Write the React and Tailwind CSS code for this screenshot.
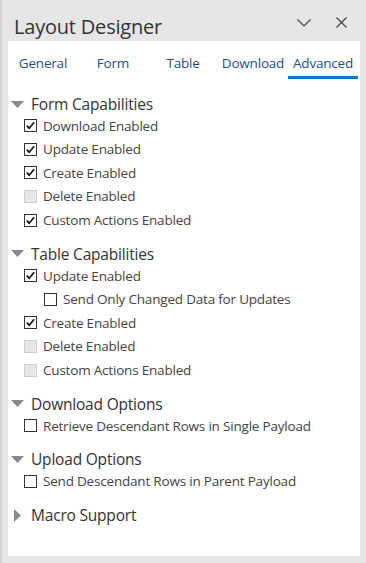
import React from "react";

const tabs = ["General", "Form", "Table", "Download", "Advanced"];

const sections = [
  {
    title: "Form Capabilities",
    open: true,
    items: [
      { label: "Download Enabled", state: "on" },
      { label: "Update Enabled", state: "on" },
      { label: "Create Enabled", state: "on" },
      { label: "Delete Enabled", state: "disabled" },
      { label: "Custom Actions Enabled", state: "on" },
    ],
  },
  {
    title: "Table Capabilities",
    open: true,
    items: [
      { label: "Update Enabled", state: "on" },
      { label: "Send Only Changed Data for Updates", state: "off", indent: true },
      { label: "Create Enabled", state: "on" },
      { label: "Delete Enabled", state: "disabled" },
      { label: "Custom Actions Enabled", state: "disabled" },
    ],
  },
  {
    title: "Download Options",
    open: true,
    items: [{ label: "Retrieve Descendant Rows in Single Payload", state: "off" }],
  },
  {
    title: "Upload Options",
    open: true,
    items: [{ label: "Send Descendant Rows in Parent Payload", state: "off" }],
  },
  { title: "Macro Support", open: false, items: [] },
];

const Checkbox = ({ state }) => {
  if (state === "disabled") {
    return <span className="w-[13px] h-[13px] border border-[#cfcfcf] bg-[#e8e8e8] shrink-0" />;
  }
  return (
    <span className="w-[13px] h-[13px] border border-[#333] bg-white shrink-0 flex items-center justify-center">
      {state === "on" && (
        <svg width="11" height="11" viewBox="0 0 11 11">
          <path d="M1.8 5.6 L4.2 8.2 L9.2 2.2" fill="none" stroke="#111" strokeWidth="1.7" />
        </svg>
      )}
    </span>
  );
};

const Caret = ({ open }) =>
  open ? (
    <svg width="13" height="8" viewBox="0 0 13 8" className="shrink-0">
      <path d="M0 0 H13 L6.5 7 Z" fill="#8a8a8a" />
    </svg>
  ) : (
    <svg width="8" height="13" viewBox="0 0 8 13" className="shrink-0 ml-[3px] mr-[2px]">
      <path d="M0 0 V13 L7 6.5 Z" fill="#8a8a8a" />
    </svg>
  );

export default function App() {
  return (
    <div
      className="w-[366px] h-[563px] bg-[#e6e6e6] border-l-2 border-[#d2d2d2] flex flex-col"
      style={{ fontFamily: '"Open Sans", "Noto Sans", sans-serif' }}
    >
      {/* header */}
      <div className="h-[41px] flex items-center pl-[12px] pr-[19px] shrink-0">
        <h1 className="text-[20px] text-[#333] tracking-[-0.2px] pt-[12px]">Layout Designer</h1>
        <div className="ml-auto flex items-center gap-[25px] pt-[4px]">
          <svg width="14" height="8" viewBox="0 0 14 8">
            <path d="M0.5 0.5 L7 7 L13.5 0.5" fill="none" stroke="#444" strokeWidth="1.2" />
          </svg>
          <svg width="11" height="11" viewBox="0 0 11 11">
            <path d="M0.5 0.5 L10.5 10.5 M10.5 0.5 L0.5 10.5" fill="none" stroke="#444" strokeWidth="1.2" />
          </svg>
        </div>
      </div>

      {/* panel */}
      <div className="mx-[6px] bg-white h-[515px] flex flex-col">
        <div className="flex h-[38px] shrink-0">
          {tabs.map((t) => (
            <div
              key={t}
              className={`w-[70px] flex items-center justify-center text-[13.5px] text-[#1f4e8c] tracking-[-0.2px] pt-[9px] border-b-[3px] ${
                t === "Advanced" ? "border-[#0a78d4]" : "border-transparent"
              }`}
            >
              {t}
            </div>
          ))}
        </div>

        <div className="flex flex-col pt-[13px] pl-[3px] gap-[10px]">
          {sections.map((s) => (
            <div key={s.title} className="flex flex-col">
              <div className="h-[22px] flex items-center gap-[7px] pt-[3px]">
                <Caret open={s.open} />
                <span className="text-[15.5px] text-[#333] tracking-[-0.2px]">{s.title}</span>
              </div>
              {s.items.map((it) => (
                <div
                  key={it.label}
                  className={`h-[23.6px] flex items-center gap-[6px] ${it.indent ? "pl-[33px]" : "pl-[13px]"}`}
                >
                  <Checkbox state={it.state} />
                  <span className="text-[13.5px] text-[#444] tracking-[-0.2px]">{it.label}</span>
                </div>
              ))}
            </div>
          ))}
        </div>
      </div>
    </div>
  );
}
